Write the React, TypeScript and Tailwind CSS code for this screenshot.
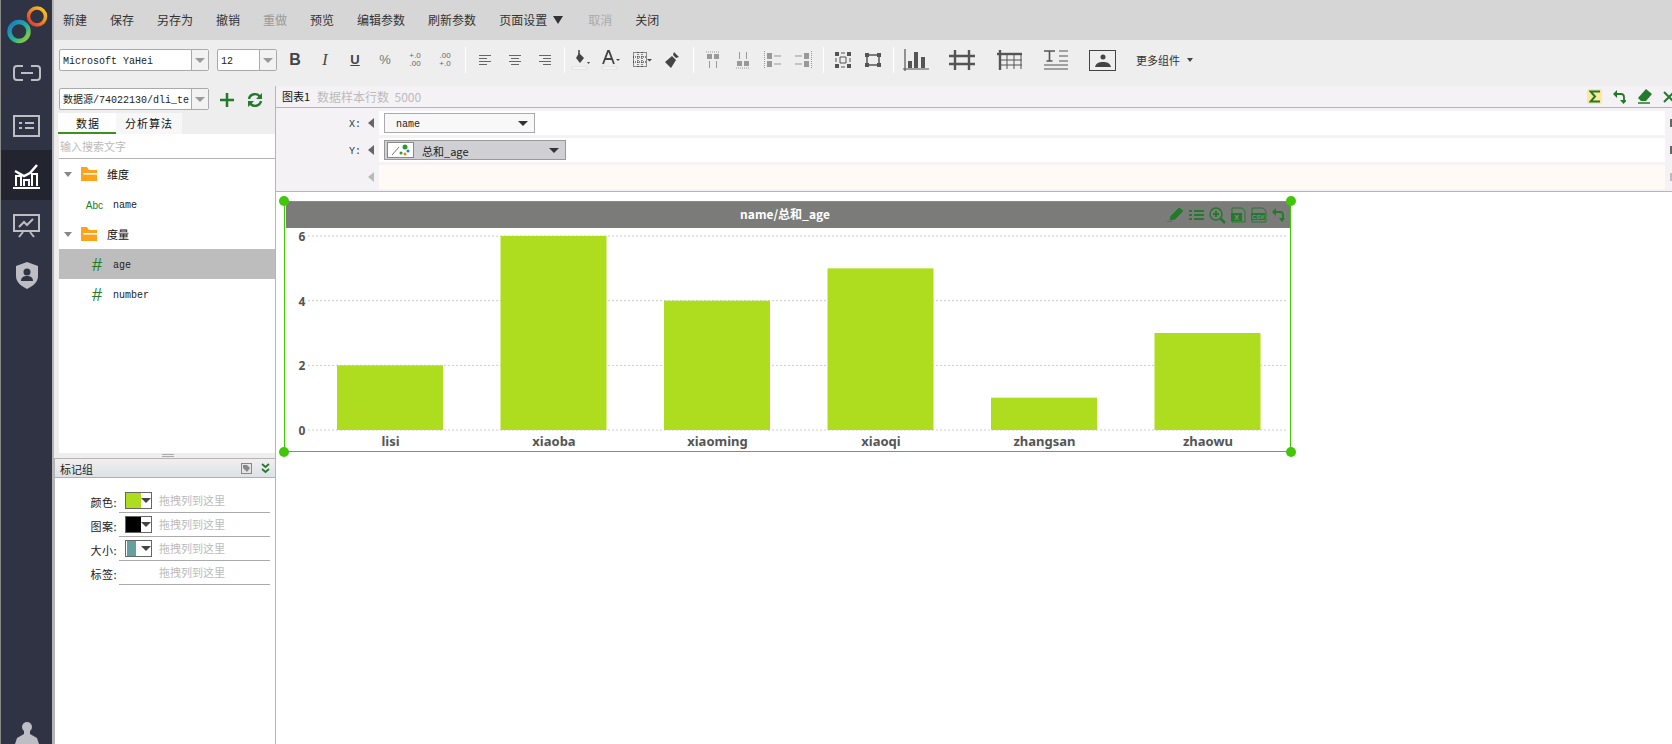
import React from "react";

const green = "#237a2b";
const gray = "#555";

const menus = ["新建", "保存", "另存为", "撤销", "重做", "预览", "编辑参数", "刷新参数"];

const Tool = ({ w = "w-[30px]", children }: { w?: string; children: React.ReactNode }) => (
  <div className={`${w} h-[26px] flex items-center justify-center shrink-0`}>{children}</div>
);

const Sep = () => <div className="w-px h-[26px] bg-white shrink-0" />;

const Ico = ({ w = 20, h = 20, children }: { w?: number; h?: number; children: React.ReactNode }) => (
  <svg width={w} height={h} viewBox={`0 0 ${w} ${h}`} fill="none">
    {children}
  </svg>
);

const AlignIcon = ({ mode }: { mode: "l" | "c" | "r" }) => {
  const rows = [12, 8, 12, 8];
  return (
    <Ico w={14} h={12}>
      {rows.map((len, i) => {
        const x = mode === "l" ? 1 : mode === "c" ? 7 - len / 2 : 13 - len;
        return <rect key={i} x={x} y={1 + i * 3} width={len} height="1" fill="#666" />;
      })}
    </Ico>
  );
};

const Combo = ({ className, children }: { className: string; children: React.ReactNode }) => (
  <div className={`${className} h-[22px] flex border border-[#aaa] rounded-[2px] bg-white shrink-0`}>
    <div className="flex-1 min-w-0 overflow-hidden whitespace-nowrap flex items-center pl-[3px] pt-[2px] text-[10px] text-[#222] font-['Liberation_Mono','Noto_Sans_CJK_SC',monospace]">
      {children}
    </div>
    <div className="w-[17px] border-l border-[#aaa] bg-[#f2f2f2] flex items-center justify-center">
      <div className="w-0 h-0 border-x-[5px] border-x-transparent border-t-[5px] border-t-[#999]" />
    </div>
  </div>
);

const TreeCaret = () => <div className="w-0 h-0 border-x-[4px] border-x-transparent border-t-[5px] border-t-[#888]" />;

const Folder = () => (
  <svg width="16" height="16" viewBox="0 0 16 16">
    <path d="M0 1h6l2 3h8v11H0z" fill="#ffa31a" />
    <rect x="2.5" y="7" width="13.5" height="1.6" fill="#fff" />
  </svg>
);

const FolderRow = ({ label }: { label: string }) => (
  <div className="h-[30px] flex items-center">
    <div className="ml-[5px] w-[17px]">
      <TreeCaret />
    </div>
    <Folder />
    <span className="ml-[10px] text-[11px] text-[#111]">{label}</span>
  </div>
);

const FieldRow = ({ icon, label, active }: { icon: string; label: string; active?: boolean }) => (
  <div className={`h-[30px] pt-[2px] flex items-center ${active ? "bg-[#bdbdbd]" : ""}`}>
    <span className={`w-[44px] text-right text-[#237a2b] ${icon === "#" ? "text-[18px] pr-[1px] leading-[20px]" : "text-[10px]"} font-['Liberation_Sans',sans-serif]`}>
      {icon}
    </span>
    <span className="ml-[10px] text-[10px] text-[#222] font-['Liberation_Mono',monospace]">{label}</span>
  </div>
);

const MarkRow = ({ label, children }: { label: string; children?: React.ReactNode }) => (
  <div className="h-[24px] flex items-center">
    <span className="w-[64px] pr-[2px] pt-[2px] text-right text-[11px] text-[#222] leading-[16px] tracking-[0.5px]">{label}:</span>
    <div className="w-[151px] h-[24px] border-b border-[#aaa] flex items-center relative">
      <div className="w-[40px] pl-[6px] shrink-0">{children}</div>
      <span className="text-[11px] text-[#bbb] whitespace-nowrap">拖拽列到这里</span>
    </div>
  </div>
);

const Swatch = ({ children }: { children: React.ReactNode }) => (
  <div className="w-[27px] h-[17px] border border-[#666] bg-white flex items-stretch">
    {children}
    <div className="flex-1 flex items-center justify-center">
      <div className="w-0 h-0 border-x-[5px] border-x-transparent border-t-[5px] border-t-[#444]" />
    </div>
  </div>
);

const Handle = ({ className }: { className: string }) => (
  <div className={`absolute w-[10px] h-[10px] rounded-full bg-[#42c708] ${className}`} />
);

const RowArrow = ({ light }: { light?: boolean }) => (
  <div className={`w-0 h-0 border-y-[5px] border-y-transparent border-r-[6px] ${light ? "border-r-[#bbb]" : "border-r-[#666]"}`} />
);

const EdgeMark = ({ light }: { light?: boolean }) => (
  <div className="w-[7px] flex justify-end">
    <div className={`w-[2px] h-[8px] ${light ? "bg-[#bbb]" : "bg-[#666]"}`} />
  </div>
);

const data = [
  { name: "lisi", v: 2 },
  { name: "xiaoba", v: 6 },
  { name: "xiaoming", v: 4 },
  { name: "xiaoqi", v: 5 },
  { name: "zhangsan", v: 1 },
  { name: "zhaowu", v: 3 },
];

const Chart = () => {
  const base = 202;
  const unit = 32.33;
  return (
    <svg width="1004" height="222" viewBox="0 0 1004 222" className="block">
      {[0, 2, 4, 6].map((t) => (
        <g key={t}>
          <line x1="22" x2="1000" y1={base - t * unit} y2={base - t * unit} stroke="#ccc" strokeDasharray="2 2" />
          <text x="16" y={base - t * unit + 5} fontSize="12" fontWeight="700" fill="#555" textAnchor="middle" fontFamily="Noto Sans, sans-serif">
            {t}
          </text>
        </g>
      ))}
      {data.map((d, i) => (
        <g key={d.name}>
          <rect x={51 + i * 163.5} y={base - d.v * unit} width="106" height={d.v * unit} fill="#aedd1f" />
          <text x={104.5 + i * 163.5} y="218" fontSize="13" fontWeight="700" fill="#555" textAnchor="middle" fontFamily="Noto Sans, sans-serif">
            {d.name}
          </text>
        </g>
      ))}
    </svg>
  );
};

export default function App() {
  return (
    <div className="w-[1672px] h-[744px] flex overflow-hidden bg-white text-[#222] font-['Noto_Sans_CJK_SC',sans-serif]">
      {/* Sidebar */}
      <aside className="w-[54px] h-full shrink-0 flex flex-col bg-[#2f3344] border-l border-[#888] border-r-2 border-r-[#b5b5b5]">
        <div className="h-[150px] flex flex-col items-center">
          <svg width="42" height="40" viewBox="0 0 42 40" className="mt-[5px]">
            <defs>
              <linearGradient id="big" x1="0" y1="0" x2="1" y2="1">
                <stop offset="0" stopColor="#1a78c8" />
                <stop offset="0.55" stopColor="#22b39a" />
                <stop offset="1" stopColor="#a5cf24" />
              </linearGradient>
              <linearGradient id="small" x1="0" y1="1" x2="1" y2="0">
                <stop offset="0" stopColor="#e22b36" />
                <stop offset="0.55" stopColor="#f08a1c" />
                <stop offset="1" stopColor="#f5d327" />
              </linearGradient>
            </defs>
            <circle cx="13" cy="26.5" r="9.5" stroke="url(#big)" strokeWidth="4.5" fill="none" />
            <circle cx="31" cy="11.500" r="8.500" stroke="url(#small)" strokeWidth="3.500" fill="none" />
          </svg>
          <svg width="28" height="16" viewBox="0 0 28 16" className="mt-[20px]" fill="none" stroke="#bdbdc4" strokeWidth="2">
            <path d="M10 1H4a3 3 0 0 0-3 3v8a3 3 0 0 0 3 3h6M18 1h6a3 3 0 0 1 3 3v8a3 3 0 0 1-3 3h-6M8 8h12" />
          </svg>
          <svg width="27" height="22" viewBox="0 0 27 22" className="mt-[34px]" fill="none">
            <rect x="1" y="1" width="25" height="20" stroke="#bdbdc4" strokeWidth="2" />
            <path d="M6 8h3M12 8h9M6 13h3M12 13h9" stroke="#bdbdc4" strokeWidth="2" />
          </svg>
        </div>
        <div className="h-[50px] bg-[#22252f] flex items-center justify-center">
          <svg width="27" height="27" viewBox="0 0 27 27" fill="none" stroke="#fff">
            <path d="M2 9l9 5 6-3 7-8" strokeWidth="2.5" />
            <path d="M3 24V14h5v10M11 24v-6h5v6M19 24V12h5v12" strokeWidth="2" />
            <path d="M0 26h27" strokeWidth="2" />
          </svg>
        </div>
        <div className="flex flex-col items-center">
          <svg width="27" height="24" viewBox="0 0 27 24" className="mt-[14px]" fill="none" stroke="#bdbdc4">
            <rect x="1" y="1" width="25" height="16" strokeWidth="2" />
            <path d="M6 13l5-5 3 3 6-6" strokeWidth="2" />
            <path d="M10 18l-4 5M17 18l4 5" strokeWidth="2" />
          </svg>
          <svg width="22" height="27" viewBox="0 0 22 27" className="mt-[24px]">
            <path d="M11 0l11 4v10c0 6-5 10-11 13C5 24 0 20 0 14V4z" fill="#bdbdc4" />
            <circle cx="11" cy="10" r="3.5" fill="#2f3344" />
            <path d="M5 19c0-4 3-5 6-5s6 1 6 5z" fill="#2f3344" />
          </svg>
        </div>
        <div className="mt-auto flex justify-center">
          <svg width="24" height="23" viewBox="0 0 24 23">
            <circle cx="12" cy="6" r="5" fill="#bdbdc4" />
            <path d="M9 10h6v3l7 4 2 6H0l2-6 7-4z" fill="#bdbdc4" />
          </svg>
        </div>
      </aside>

      <div className="flex-1 min-w-0 flex flex-col">
        {/* Menu */}
        <div className="h-[40px] shrink-0 bg-[#d6d6d6] flex items-center gap-[23px] pl-[9px] pb-[1px] text-[12px] text-[#333]">
          {menus.map((m) => (
            <span key={m} className={m === "重做" ? "text-[#999]" : ""}>
              {m}
            </span>
          ))}
          <span className="flex items-center gap-[6px]">
            页面设置
            <span className="w-0 h-0 border-x-[5px] border-x-transparent border-t-[8px] border-t-[#333]" />
          </span>
          <span className="ml-[2px] text-[#aaa]">取消</span>
          <span>关闭</span>
        </div>

        {/* Toolbar */}
        <div className="h-[46px] shrink-0 bg-[#eeeeee] flex items-start pl-[5px] pt-[7px]">
          <div className="flex items-center h-[26px]">
            <Combo className="w-[150px]">Microsoft YaHei</Combo>
            <Combo className="w-[60px] ml-[8px]">12</Combo>
          </div>
          <div className="flex items-center ml-[3px]">
            <Tool><span className="text-[16px] font-bold text-[#444] font-['Liberation_Sans',sans-serif]">B</span></Tool>
            <Tool><span className="text-[16px] italic text-[#444] font-['Liberation_Serif',serif]">I</span></Tool>
            <Tool><span className="text-[13px] font-bold underline text-[#444] font-['Liberation_Sans',sans-serif]">U</span></Tool>
            <Tool><span className="text-[13px] text-[#777] font-['Liberation_Sans',sans-serif]">%</span></Tool>
            <Tool>
              <div className="text-[8px] leading-[8px] text-[#666] font-['Liberation_Sans',sans-serif] text-right">+.0<br />.00</div>
            </Tool>
            <Tool>
              <div className="text-[8px] leading-[8px] text-[#666] font-['Liberation_Sans',sans-serif] text-right">.00<br />+.0</div>
            </Tool>
            <div className="ml-[5px] mr-[4px]"><Sep /></div>
            <Tool><AlignIcon mode="l" /></Tool>
            <Tool><AlignIcon mode="c" /></Tool>
            <Tool><AlignIcon mode="r" /></Tool>
            <div className="ml-[4px] mr-[2px]"><Sep /></div>
            <Tool>
              <Ico w={22} h={22}>
                <path d="M8 4l5 5-4 5-4-5z" fill="#444" />
                <path d="M8 1v4" stroke="#444" strokeWidth="1.5" />
                <path d="M16 13h3l-1.500 2z" fill="#444" />
                <rect x="1" y="18" width="15" height="2" fill="#fff" stroke="#ccc" strokeWidth=".5" />
              </Ico>
            </Tool>
            <Tool>
              <Ico w={22} h={22}>
                <path d="M2 15L7 2h1l5 13M4 10h7" stroke="#444" strokeWidth="1.8" />
                <path d="M15 10h4l-2 2z" fill="#444" />
                <rect x="1" y="18" width="15" height="2" fill="#fff" stroke="#ccc" strokeWidth=".5" />
              </Ico>
            </Tool>
            <Tool>
              <Ico w={20} h={18}>
                <rect x="1.500" y="1.500" width="13" height="14" stroke="#222" strokeDasharray="1 1" />
                <path d="M6 1v15M10 1v15M1 6h14M1 11h14" stroke="#222" strokeDasharray="1 1" />
                <path d="M15 8h5l-2.500 2.500z" fill="#444" />
              </Ico>
            </Tool>
            <Tool>
              <Ico w={16} h={18}>
                <path d="M10 1l5 5-3 1-3-3zM8 5l4 4-5 8-6-6z" fill="#444" />
              </Ico>
            </Tool>
            <div className="ml-[6px] mr-[4px]"><Sep /></div>
            <Tool>
              <Ico w={14} h={18}>
                <path d="M0 1h14" stroke="#999" strokeDasharray="1 1" />
                <path d="M1 3h5v5H1zM8 3h5v5H8z" fill="#999" />
                <path d="M3.500 10v7M10.500 10v7" stroke="#999" />
              </Ico>
            </Tool>
            <Tool>
              <Ico w={14} h={18}>
                <path d="M3.500 1v7M10.500 1v7" stroke="#999" />
                <path d="M1 10h5v5H1zM8 10h5v5H8z" fill="#999" />
                <path d="M0 17h14" stroke="#999" strokeDasharray="1 1" />
              </Ico>
            </Tool>
            <Tool>
              <Ico w={18} h={18}>
                <path d="M.5 0v18" stroke="#999" strokeDasharray="1 1" />
                <path d="M3 2h5v6H3zM3 10h5v6H3z" fill="#999" />
                <path d="M10 5h7M10 13h7" stroke="#999" />
              </Ico>
            </Tool>
            <Tool>
              <Ico w={18} h={18}>
                <path d="M1 5h7M1 13h7" stroke="#999" />
                <path d="M10 2h5v6h-5zM10 10h5v6h-5z" fill="#999" />
                <path d="M17.500 0v18" stroke="#999" strokeDasharray="1 1" />
              </Ico>
            </Tool>
            <div className="ml-[5px] mr-[4px]"><Sep /></div>
            <Tool>
              <Ico w={16} h={16}>
                <path d="M0 0h4v4H0zM12 0h4v4h-4zM0 12h4v4H0zM12 12h4v4h-4z" fill="#555" />
                <path d="M6 1h4M1 6v4M15 6v4M6 15h4M5 5h6v6H5z" stroke="#555" />
              </Ico>
            </Tool>
            <Tool>
              <Ico w={16} h={16}>
                <path d="M0 1h4v4H0zM12 1h4v4h-4zM0 11h4v4H0zM12 11h4v4h-4z" fill="#555" />
                <path d="M4 3h8M2 5v6M14 5v6M4 13h8" stroke="#555" strokeWidth="1.500" />
              </Ico>
            </Tool>
            <div className="ml-[5px]"><Sep /></div>
            <Tool w="w-[44px]">
              <Ico w={26} h={22}>
                <path d="M2 0v22M0 20h26" stroke={gray} strokeWidth="1.200" />
                <path d="M5 12h4v7H5zM11 3h4v16h-4zM18 8h4v11h-4z" fill={gray} />
              </Ico>
            </Tool>
            <Tool w="w-[47px]">
              <Ico w={28} h={22}>
                <path d="M7 1v20M21 1v20M1 7h26M1 15h26" stroke={gray} strokeWidth="2.400" />
              </Ico>
            </Tool>
            <Tool w="w-[47px]">
              <Ico w={28} h={22}>
                <path d="M2 5h25" stroke={gray} strokeWidth="2.400" />
                <path d="M5 1v20" stroke={gray} strokeWidth="2.400" />
                <path d="M12 5v15M19 5v15M26 5v15M5 11h22M5 16h22" stroke={gray} />
              </Ico>
            </Tool>
            <Tool w="w-[47px]">
              <Ico w={26} h={22}>
                <path d="M1 2h11M6.500 2v10M3.500 12h6" stroke={gray} strokeWidth="1.600" />
                <path d="M16 2h9M16 7h9M16 12h9M1 16h24M1 20h24" stroke={gray} strokeWidth="1.200" />
              </Ico>
            </Tool>
            <Tool w="w-[47px]">
              <Ico w={27} h={22}>
                <rect x=".5" y="1.500" width="26" height="20" stroke="#444" />
                <circle cx="14" cy="8" r="2.500" fill="#444" />
                <path d="M6 18c1-4 4-5 8-5s7 1 8 5z" fill="#444" />
              </Ico>
            </Tool>
            <span className="ml-[10px] text-[11px] text-[#333] whitespace-nowrap">更多组件</span>
            <span className="ml-[7px] w-0 h-0 border-x-[3px] border-x-transparent border-t-[4px] border-t-[#444]" />
          </div>
        </div>

        <div className="flex-1 min-h-0 flex">
          {/* Left panel */}
          <div className="w-[222px] shrink-0 flex flex-col border-r border-[#b5b5b5]">
            <div className="h-[367px] shrink-0 flex flex-col bg-[#eeeeee]">
              <div className="h-[27px] shrink-0 flex items-start pt-[2px] pl-[5px]">
                <Combo className="w-[150px]">数据源/74022130/dli_te</Combo>
                <svg width="16" height="16" viewBox="0 0 16 16" className="ml-[10px] mt-[4px]">
                  <path d="M8 1v14M1 8h14" stroke={green} strokeWidth="2.500" />
                </svg>
                <svg width="16" height="16" viewBox="0 0 16 16" className="ml-[12px] mt-[4px]" fill="none">
                  <path d="M2 7a6 6 0 0 1 11-2M14 9a6 6 0 0 1-11 2" stroke={green} strokeWidth="2.400" />
                  <path d="M15 1v6H9zM1 15V9h6z" fill={green} />
                </svg>
              </div>
              <div className="h-[21px] shrink-0 flex pl-[4px] text-[11px] text-[#111]">
                <div className="w-[58px] pl-[2px] bg-white border-b-2 border-[#3f8f1f] text-center leading-[20px] tracking-[1px]">数据</div>
                <div className="w-[66px] bg-[#f7f7f7] text-center leading-[20px] tracking-[1px]">分析算法</div>
              </div>
              <div className="ml-[5px] flex-1 min-h-0 bg-white flex flex-col">
                <div className="h-[25px] shrink-0 border-b border-[#b5b5b5] flex items-center pl-[1px] text-[11px] text-[#bbb] bg-white">
                  <span>输入搜索文字</span>
                </div>
                <FolderRow label="维度" />
                <FieldRow icon="Abc" label="name" />
                <FolderRow label="度量" />
                <FieldRow icon="#" label="age" active />
                <FieldRow icon="#" label="number" />
              </div>
            </div>
            <div className="h-[5px] shrink-0 bg-[#eeeeee] flex flex-col items-center justify-center gap-px pl-[6px]">
              <div className="w-[12px] h-px bg-[#aaa]" />
              <div className="w-[12px] h-px bg-[#aaa]" />
            </div>
            <div className="flex-1 min-h-0 border-t border-l border-[#b5b5b5]">
              <div className="h-[19px] flex items-center justify-between border-b border-[#b0b0b0] pl-[5px] pr-[5px] bg-gradient-to-b from-[#f2eef0] to-[#dce2e6]">
                <span className="text-[11px] text-[#222] pt-[3px]">标记组</span>
                <div className="flex items-center gap-[9px]">
                  <svg width="11" height="11" viewBox="0 0 11 11">
                    <rect x=".5" y=".5" width="10" height="10" fill="#e4e4e4" stroke="#888" />
                    <path d="M2 2h4l3 3-3 4-4-4z" fill="#888" />
                  </svg>
                  <svg width="9" height="11" viewBox="0 0 9 11" fill="none" stroke={green} strokeWidth="1.800">
                    <path d="M1 1l3.500 3L8 1M1 6l3.500 3L8 6" />
                  </svg>
                </div>
              </div>
              <div className="pt-[11px]">
                <MarkRow label="颜色">
                  <Swatch><div className="w-[15px] bg-[#aedd1f]" /></Swatch>
                </MarkRow>
                <MarkRow label="图案">
                  <Swatch><div className="w-[15px] bg-black" /></Swatch>
                </MarkRow>
                <MarkRow label="大小">
                  <Swatch><div className="ml-px w-[9px] bg-[#66a09e]" /><div className="w-[5px]" /></Swatch>
                </MarkRow>
                <MarkRow label="标签" />
              </div>
            </div>
          </div>

          {/* Right panel */}
          <div className="flex-1 min-w-0 flex flex-col">
            <div className="h-[22px] shrink-0 bg-[#f5f2f6] border-b border-[#b5b5b5] flex items-center pl-[6px] text-[11px]">
              <span className="text-[#111]">图表1</span>
              <span className="ml-[7px] text-[12px] text-[#bbb]">数据样本行数&nbsp;&nbsp;5000</span>
              <div className="ml-auto flex items-center gap-[11px] mr-[-3px]">
                <div className="w-[15px] h-[15px] rounded-[2px] bg-[#fde79b] flex items-center justify-center">
                  <svg width="11" height="13" viewBox="0 0 11 13" fill="none" stroke={green} strokeWidth="2">
                    <path d="M11 1.500H1.500L6 6.500 1.500 11.500H11" />
                  </svg>
                </div>
                <svg width="13" height="14" viewBox="0 0 13 14" fill="none">
                  <path d="M3 4h5a3 3 0 0 1 3 3v4" stroke={green} strokeWidth="1.800" />
                  <path d="M4 0v8L0 4zM7 10h7l-3.500 4z" fill={green} />
                </svg>
                <svg width="15" height="15" viewBox="0 0 15 15">
                  <path d="M9 0l6 5-6 7H4L1 9z" fill={green} />
                  <path d="M1 14h12" stroke={green} strokeWidth="1.500" />
                </svg>
                <svg width="12" height="12" viewBox="0 0 12 12" stroke={green} strokeWidth="2">
                  <path d="M1 1l10 10M11 1L1 11" />
                </svg>
              </div>
            </div>
            <div className="h-[84px] shrink-0 bg-[#f5f2f6] border-b border-[#b5b5b5] pt-[3px] flex flex-col gap-[3px]">
              <div className="h-[24px] flex items-center">
                <span className="w-[85px] pt-[2px] text-right text-[10px] text-[#333] font-['Liberation_Mono',monospace]">X:</span>
                <div className="ml-[7px]"><RowArrow /></div>
                <div className="ml-[5px] flex-1 h-full bg-white flex items-center pl-[5px]">
                  <div className="w-[151px] h-[20px] border border-[#aaa] bg-[#f8f8f8] flex items-center justify-between pl-[11px] pr-[6px]">
                    <span className="pt-[2px] text-[10px] text-[#222] font-['Liberation_Mono',monospace]">name</span>
                    <div className="w-0 h-0 border-x-[5px] border-x-transparent border-t-[5px] border-t-[#333]" />
                  </div>
                </div>
                <EdgeMark />
              </div>
              <div className="h-[24px] flex items-center">
                <span className="w-[85px] pt-[2px] text-right text-[10px] text-[#333] font-['Liberation_Mono',monospace]">Y:</span>
                <div className="ml-[7px]"><RowArrow /></div>
                <div className="ml-[5px] flex-1 h-full bg-white flex items-center pl-[5px]">
                  <div className="w-[182px] h-[20px] border border-[#999] bg-[#d0cfd3] flex items-center pl-[2px] pr-[6px]">
                    <div className="w-[27px] h-[16px] bg-white border border-[#888] flex items-center justify-center">
                      <svg width="20" height="12" viewBox="0 0 20 12">
                        <path d="M1 11l7-8" stroke="#777" />
                        <circle cx="14" cy="3" r="2.500" fill="#2a9a35" />
                        <circle cx="10" cy="9" r="1.500" fill="#2a9a35" />
                        <circle cx="17" cy="7" r="1.500" fill="#2a7ac0" />
                        <circle cx="14" cy="10" r="1.500" fill="#f07a20" />
                      </svg>
                    </div>
                    <span className="ml-[8px] pt-[2px] text-[11px] text-[#222]">总和_age</span>
                    <div className="ml-auto w-0 h-0 border-x-[5px] border-x-transparent border-t-[5px] border-t-[#333]" />
                  </div>
                </div>
                <EdgeMark />
              </div>
              <div className="h-[24px] flex items-center">
                <div className="w-[92px]" />
                <RowArrow light />
                <div className="ml-[5px] flex-1 h-full bg-[#fffaf5]" />
                <EdgeMark light />
              </div>
            </div>

            {/* Chart */}
            <div className="flex-1 min-h-0 pl-[8px] pt-[9px]">
              <div className="relative w-[1007px] h-[251px] border border-[#42c708] pl-px">
                <div className="h-[26px] w-[1004px] bg-[#7b7c7a] relative flex items-center justify-center pr-[6px] pb-[2px] text-[12px] font-bold text-white">
                  <span>name/总和_age</span>
                  <div className="absolute right-[5px] top-0 h-full flex items-center gap-[5px]">
                    <svg width="17" height="14" viewBox="0 0 17 14">
                      <path d="M12 0l4 3-8 8-5 1 1-4zM0 14h5" fill={green} stroke={green} />
                    </svg>
                    <svg width="15" height="12" viewBox="0 0 15 12" stroke={green} strokeWidth="2">
                      <path d="M0 2h3M5 2h10M0 6h3M5 6h10M0 10h3M5 10h10" />
                    </svg>
                    <svg width="17" height="17" viewBox="0 0 17 17" fill="none" stroke={green} strokeWidth="1.500">
                      <circle cx="7" cy="7" r="6" />
                      <path d="M4 7h6M7 4v6" strokeWidth="2" />
                      <path d="M11 11l5 5" strokeWidth="2.500" />
                    </svg>
                    <svg width="15" height="16" viewBox="0 0 15 16" fill="none">
                      <path d="M3 1h8l3 3v11H1V1z" stroke={green} />
                      <rect x="0" y="6" width="11" height="8" fill={green} />
                      <text x="5.500" y="12.500" fontSize="7" fontWeight="700" fill="#8a8a8a" textAnchor="middle" fontFamily="Liberation Sans, sans-serif">X</text>
                    </svg>
                    <svg width="16" height="16" viewBox="0 0 16 16" fill="none">
                      <path d="M3 1h9l3 3v11H1V1z" stroke={green} />
                      <rect x="0" y="6" width="14" height="7" fill={green} />
                      <text x="7" y="12" fontSize="6" fontWeight="700" fill="#8a8a8a" textAnchor="middle" fontFamily="Liberation Sans, sans-serif">CSV</text>
                    </svg>
                    <svg width="13" height="14" viewBox="0 0 13 14" fill="none">
                      <path d="M3 4h5a3 3 0 0 1 3 3v4" stroke={green} strokeWidth="1.800" />
                      <path d="M4 0v8L0 4zM7 10h6l-3 4z" fill={green} />
                    </svg>
                  </div>
                </div>
                <Chart />
                <Handle className="left-[-6px] top-[-6px]" />
                <Handle className="right-[-6px] top-[-6px]" />
                <Handle className="left-[-6px] bottom-[-6px]" />
                <Handle className="right-[-6px] bottom-[-6px]" />
              </div>
            </div>
          </div>
        </div>
      </div>
    </div>
  );
}
